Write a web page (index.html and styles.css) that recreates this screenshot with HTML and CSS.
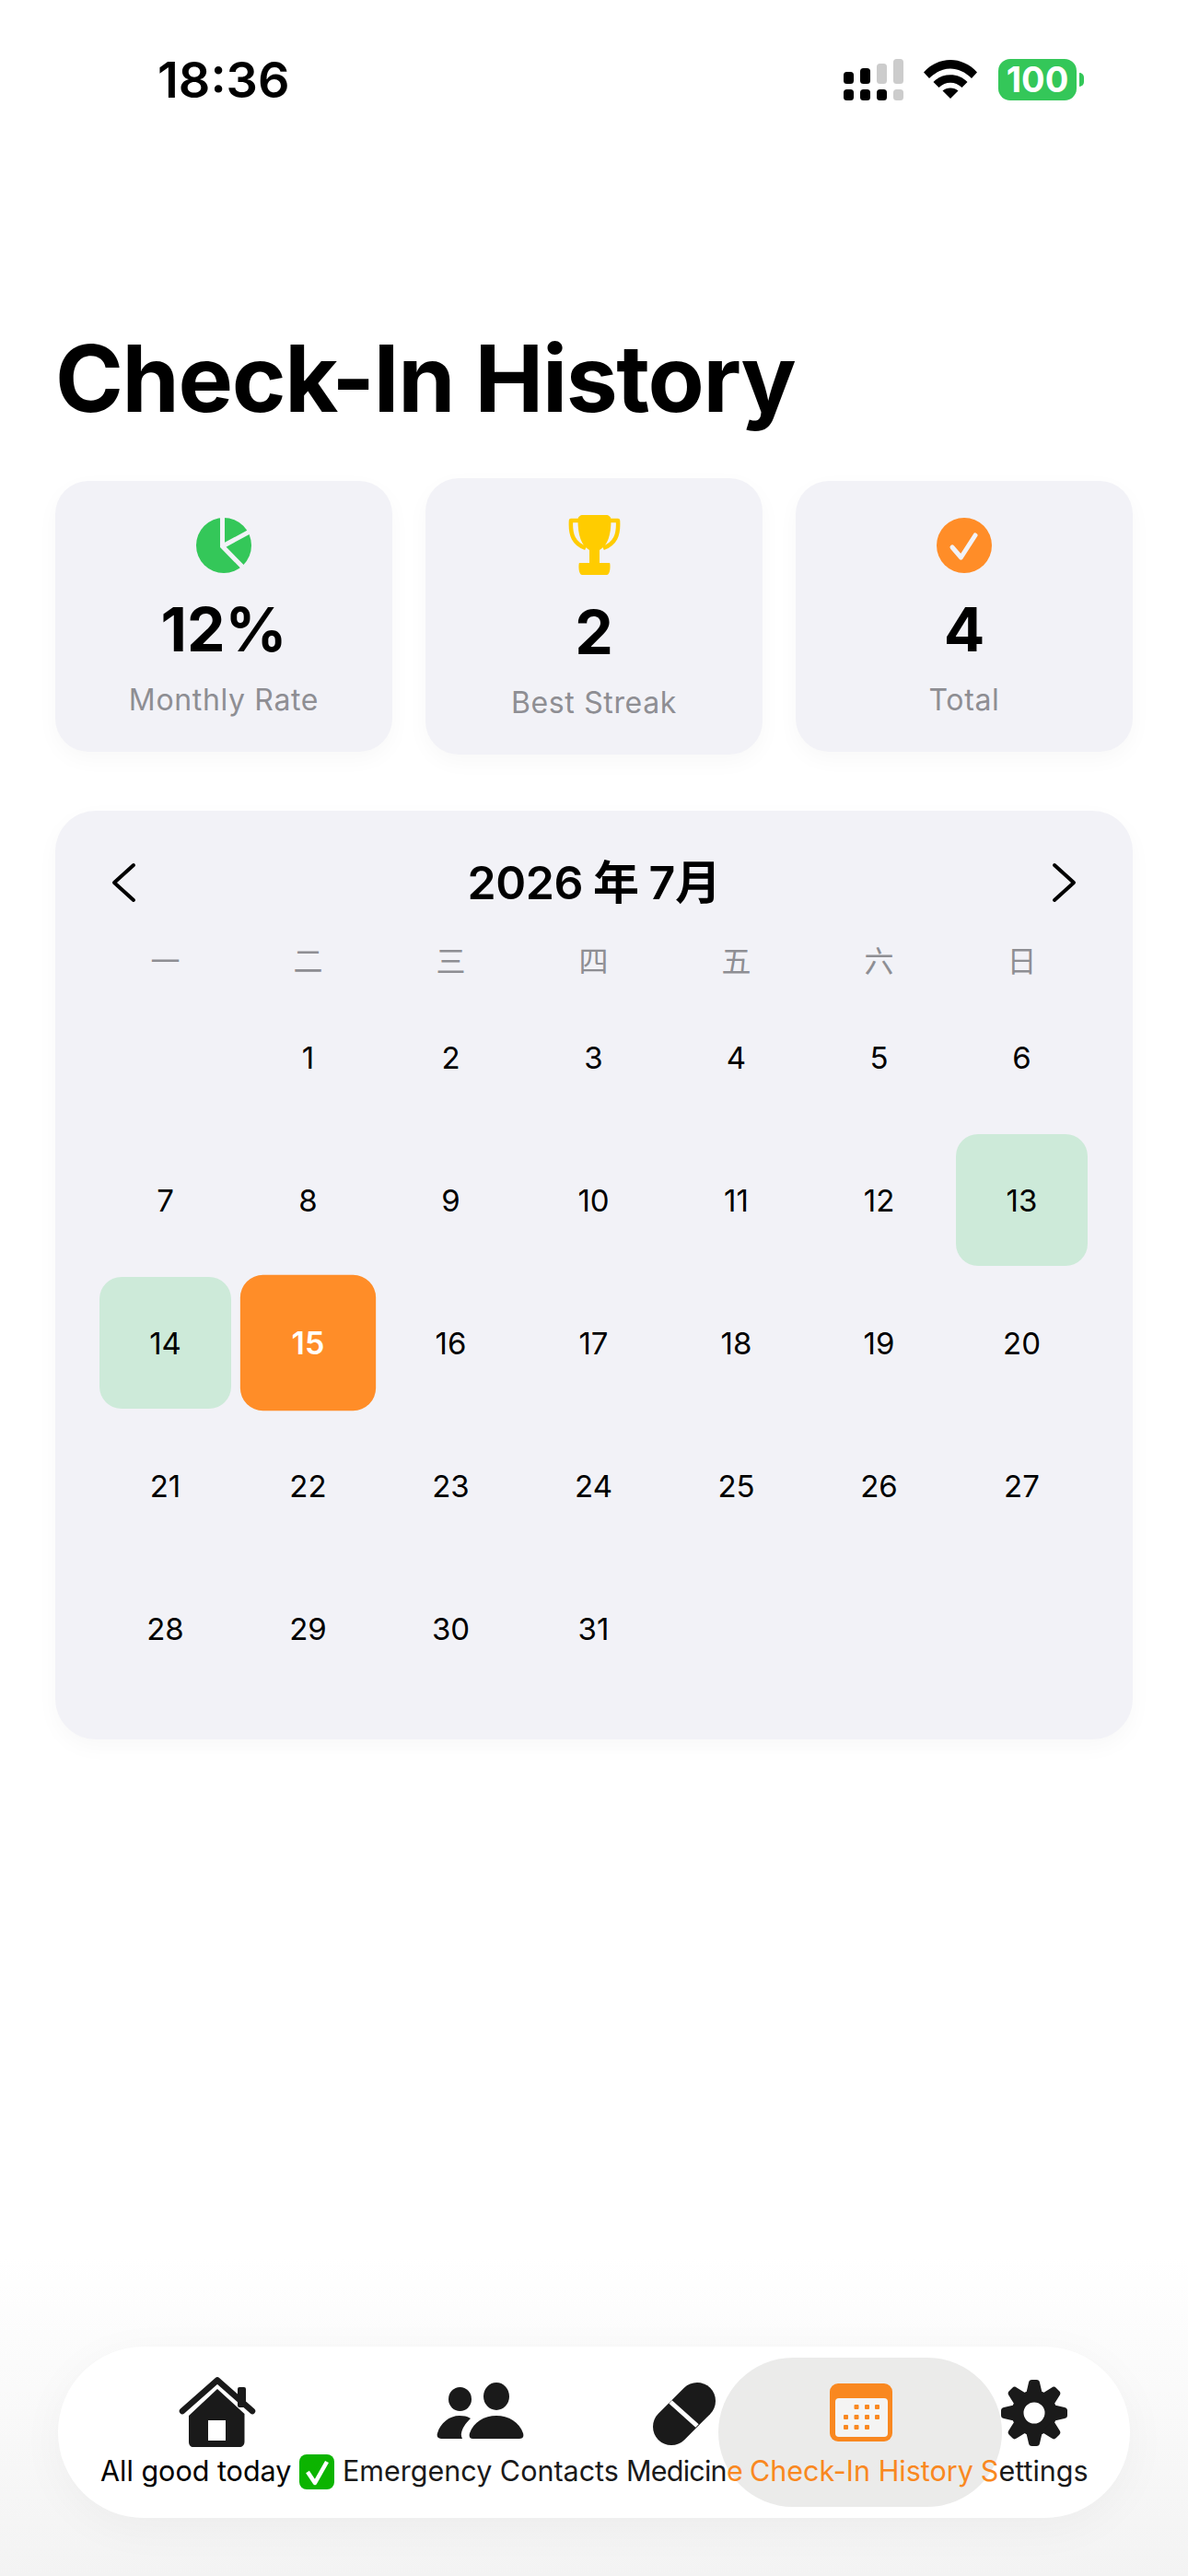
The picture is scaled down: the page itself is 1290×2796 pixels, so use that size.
FILE: index.html
```html
<!DOCTYPE html>
<html lang="en">
<head>
<meta charset="utf-8">
<title>Check-In History</title>
<link rel="stylesheet" href="styles.css">
</head>
<body>
<div class="page">
  <header class="status">
    <span class="time">18:36</span>
    <div class="status-icons">
      <svg class="signal" width="65" height="45" viewBox="0 0 65 45">
        <rect x="0" y="14" width="11" height="13" rx="3.5" fill="#000"/>
        <rect x="18" y="10" width="11" height="17" rx="3.5" fill="#000"/>
        <rect x="36" y="5" width="11" height="22" rx="3.5" fill="#ccc"/>
        <rect x="54" y="0" width="11" height="27" rx="3.5" fill="#ccc"/>
        <rect x="0" y="33" width="11" height="12" rx="3.5" fill="#000"/>
        <rect x="18" y="33" width="11" height="12" rx="3.5" fill="#000"/>
        <rect x="36" y="33" width="11" height="12" rx="3.5" fill="#000"/>
        <rect x="54" y="33" width="11" height="12" rx="3.5" fill="#ccc"/>
      </svg>
      <svg class="wifi" width="58" height="42" viewBox="0 0 58 42">
        <path d="M0 13.5 C16 -4.5 42 -4.5 58 13.5 L52 20 C38 6 20 6 6 20 Z" fill="#000"/>
        <path d="M10.500 24 C20 13.500 38 13.500 47.500 24 L41.500 30 C34 23 24 23 16.500 30 Z" fill="#000"/>
        <path d="M20.500 33.500 C25 29.500 33 29.500 37.500 33.500 L29 42 Z" fill="#000"/>
      </svg>
      <div class="battery">
        <span class="battery-body">100</span>
        <span class="battery-nub"></span>
      </div>
    </div>
  </header>

  <main class="content">
    <h1 class="title">Check-In History</h1>

    <section class="stats">
      <div class="stat">
        <svg class="stat-icon" width="60" height="60" viewBox="0 0 60 60">
          <circle cx="30" cy="30" r="30" fill="#34c759"/>
          <path d="M28.500 -1 V31 L51 54 M28.500 31 L60 14" fill="none" stroke="#f2f2f7" stroke-width="5"/>
        </svg>
        <div class="stat-value">12%</div>
        <div class="stat-label">Monthly Rate</div>
      </div>
      <div class="stat">
        <svg class="stat-icon" width="57" height="66" viewBox="0 0 57 66">
          <path d="M11 6 H3 C2 22 6 31 19 36 M46 6 H54 C55 22 51 31 38 36" fill="none" stroke="#ffcc00" stroke-width="4.500" stroke-linejoin="round"/>
          <path d="M16 0 H41 C44 0 46.500 2 46.500 5 C46.500 22 43 33 34 38 V52 H45 C46 53 46 65 42 65 H15 C11 65 11 53 12 52 H23 V38 C14 33 10.500 22 10.500 5 C10.500 2 13 0 16 0 Z" fill="#ffcc00"/>
        </svg>
        <div class="stat-value">2</div>
        <div class="stat-label">Best Streak</div>
      </div>
      <div class="stat">
        <svg class="stat-icon" width="60" height="60" viewBox="0 0 60 60">
          <circle cx="30" cy="30" r="30" fill="#ff8d28"/>
          <path d="M17 32 L26.500 43 L42 19" fill="none" stroke="#f2f2f7" stroke-width="5" stroke-linecap="round" stroke-linejoin="round"/>
        </svg>
        <div class="stat-value">4</div>
        <div class="stat-label">Total</div>
      </div>
    </section>

    <section class="calendar">
      <div class="cal-head">
        <svg class="chev" width="28" height="44" viewBox="0 0 28 44"><path d="M25 3 L4 22 L25 41" fill="none" stroke="#000" stroke-width="4" stroke-linecap="round" stroke-linejoin="round"/></svg>
        <div class="cal-title">2026 年 7月</div>
        <svg class="chev" width="28" height="44" viewBox="0 0 28 44"><path d="M3 3 L24 22 L3 41" fill="none" stroke="#000" stroke-width="4" stroke-linecap="round" stroke-linejoin="round"/></svg>
      </div>
      <div class="weekdays">
        <span>一</span><span>二</span><span>三</span><span>四</span><span>五</span><span>六</span><span>日</span>
      </div>
      <div class="days">
        <span class="day"></span><span class="day">1</span><span class="day">2</span><span class="day">3</span><span class="day">4</span><span class="day">5</span><span class="day">6</span>
        <span class="day">7</span><span class="day">8</span><span class="day">9</span><span class="day">10</span><span class="day">11</span><span class="day">12</span><span class="day done">13</span>
        <span class="day done">14</span><span class="day today">15</span><span class="day">16</span><span class="day">17</span><span class="day">18</span><span class="day">19</span><span class="day">20</span>
        <span class="day">21</span><span class="day">22</span><span class="day">23</span><span class="day">24</span><span class="day">25</span><span class="day">26</span><span class="day">27</span>
        <span class="day">28</span><span class="day">29</span><span class="day">30</span><span class="day">31</span>
      </div>
    </section>
  </main>

  <nav class="tabbar">
    <div class="tab-active"></div>
    <div class="tab tab-home">
      <svg class="tab-icon" width="84" height="80" viewBox="0 0 84 80">
        <path d="M11 42 L42 13 L71.500 40 V70 C71.500 74 69 76 66 76 H16 C13 76 11 74 11 70 Z M32 47 V69 H51 V47 Z" fill="#1a1a1a" fill-rule="evenodd"/>
        <path d="M4 37 L42 3.500 L80 37" fill="none" stroke="#1a1a1a" stroke-width="6.500" stroke-linecap="round" stroke-linejoin="round"/>
        <rect x="64" y="11" width="9" height="22" rx="2" fill="#1a1a1a"/>
      </svg>
      <span class="tab-label">All good today <svg class="emoji" width="38" height="38" viewBox="0 0 38 38" role="img" aria-label="✅"><rect width="38" height="38" rx="8" fill="#0cb400"/><path d="M9 19 L17 31 L30 8" fill="none" stroke="#fff" stroke-width="4.500" stroke-linejoin="round"/></svg></span>
    </div>
    <div class="tab">
      <svg class="tab-icon" width="95" height="80" viewBox="0 0 95 80">
        <ellipse cx="25.500" cy="24" rx="12.500" ry="13" fill="#1a1a1a"/>
        <ellipse cx="65" cy="21" rx="14" ry="15" fill="#1a1a1a"/>
        <path d="M5 67 C1 67 0 64 1 61 C4 50 14 42 25 42 C30 42 34 43 37 45 C32 50 28 55 27 61 C26.500 63 27 65 28 67 Z" fill="#1a1a1a"/>
        <path d="M39 67 C36 67 35 64 36 61 C40 49 52 42 65 42 C78 42 90 49 94 61 C95 64 94 67 90 67 Z" fill="#1a1a1a"/>
      </svg>
      <span class="tab-label">Emergency Contacts</span>
    </div>
    <div class="tab">
      <svg class="tab-icon" width="68" height="80" viewBox="0 0 68 80">
        <path d="M20 54 L48 26" fill="none" stroke="#1a1a1a" stroke-width="40" stroke-linecap="round"/>
        <path d="M19 27 L48 53" fill="none" stroke="#fff" stroke-width="5"/>
      </svg>
      <span class="tab-label tab-label-tight">Medicin<span class="tint">e</span></span>
    </div>
    <div class="tab">
      <svg class="tab-icon" width="68" height="80" viewBox="0 0 68 80">
        <rect y="7" width="68" height="63" rx="9" fill="#f98820"/>
        <rect x="6" y="23" width="57" height="42" rx="4" fill="#f4f4f3"/>
        <g fill="#f98820">
          <rect x="26.500" y="30" width="5" height="5" rx="1"/><rect x="38" y="30" width="5" height="5" rx="1"/><rect x="49" y="30" width="5" height="5" rx="1"/>
          <rect x="15" y="41" width="5" height="5" rx="1"/><rect x="26.500" y="41" width="5" height="5" rx="1"/><rect x="38" y="41" width="5" height="5" rx="1"/><rect x="49" y="41" width="5" height="5" rx="1"/>
          <rect x="15" y="52" width="5" height="5" rx="1"/><rect x="26.500" y="52" width="5" height="5" rx="1"/><rect x="38" y="52" width="5" height="5" rx="1"/>
        </g>
      </svg>
      <span class="tab-label tint">Check-In History</span>
    </div>
    <div class="tab">
      <svg class="tab-icon" width="72" height="80" viewBox="0 0 72 80">
        <g transform="translate(0 3)">
          <circle cx="36" cy="36" r="18" fill="none" stroke="#1a1a1a" stroke-width="13"/>
          <g fill="#1a1a1a">
            <path d="M27 16 L30 3 Q30.500 0 33.500 0 H38.500 Q41.500 0 42 3 L45 16 Z"/>
            <path transform="rotate(45 36 36)" d="M27 16 L30 3 Q30.500 0 33.500 0 H38.500 Q41.500 0 42 3 L45 16 Z"/>
            <path transform="rotate(90 36 36)" d="M27 16 L30 3 Q30.500 0 33.500 0 H38.500 Q41.500 0 42 3 L45 16 Z"/>
            <path transform="rotate(135 36 36)" d="M27 16 L30 3 Q30.500 0 33.500 0 H38.500 Q41.500 0 42 3 L45 16 Z"/>
            <path transform="rotate(180 36 36)" d="M27 16 L30 3 Q30.500 0 33.500 0 H38.500 Q41.500 0 42 3 L45 16 Z"/>
            <path transform="rotate(225 36 36)" d="M27 16 L30 3 Q30.500 0 33.500 0 H38.500 Q41.500 0 42 3 L45 16 Z"/>
            <path transform="rotate(270 36 36)" d="M27 16 L30 3 Q30.500 0 33.500 0 H38.500 Q41.500 0 42 3 L45 16 Z"/>
            <path transform="rotate(315 36 36)" d="M27 16 L30 3 Q30.500 0 33.500 0 H38.500 Q41.500 0 42 3 L45 16 Z"/>
          </g>
        </g>
      </svg>
      <span class="tab-label"><span class="tint">S</span>ettings</span>
    </div>
  </nav>
</div>
</body>
</html>
```

FILE: styles.css
```css
* { box-sizing: border-box; }
html, body { margin: 0; padding: 0; background: #fff; }
body { font-family: Inter, "Noto Sans CJK SC", sans-serif; color: #000; }

.page {
  position: relative;
  width: 1290px;
  height: 2796px;
  overflow: hidden;
  display: flex;
  flex-direction: column;
  background: linear-gradient(to bottom, #fff 0, #fff 2450px, #f8f8f8 2650px, #f3f3f3 2796px);
}

.status {
  height: 174px;
  display: flex;
  justify-content: space-between;
  padding: 64px 113px 0 171px;
}
.time { font-size: 54px; font-weight: 600; line-height: 46px; }
.status-icons { display: flex; align-items: flex-start; height: 45px; }
.signal { margin-right: 22px; }
.wifi { margin-right: 23px; margin-top: 1px; }
.battery { display: flex; align-items: center; }
.battery-body {
  width: 85px; height: 45px; border-radius: 13px; background: #34c759; color: #fff;
  font-size: 38px; font-weight: 700; line-height: 45px; text-align: center;
}
.battery-nub { width: 5px; height: 15px; margin-left: 3px; background: #34c759; border-radius: 0 8px 8px 0; }

.content { padding: 0 60px; }
.title { margin: 177px 0 48px; font-size: 100px; line-height: 120px; font-weight: 700; letter-spacing: -1.35px; }

.stats { display: grid; grid-template-columns: repeat(3, 366px); column-gap: 36px; align-items: center; }
.stat {
  display: flex; flex-direction: column; align-items: center;
  padding: 40px 0 36px;
  background: #f2f2f7; border-radius: 36px;
  box-shadow: 0 8px 24px rgba(0,0,0,.03);
}
.stat-icon { display: block; }
.stat-value { font-size: 66px; font-weight: 700; line-height: 80px; margin-top: 21px; }
.stat-label { font-size: 32px; color: #8e8e93; line-height: 40px; margin-top: 17px; letter-spacing: .65px; }

.calendar {
  margin-top: 61px;
  height: 1008px;
  padding: 42px 42px 0;
  background: #f2f2f7;
  border-radius: 44px;
  box-shadow: 0 8px 24px rgba(0,0,0,.03);
}
.cal-head { display: flex; justify-content: space-between; align-items: center; height: 72px; padding: 0 18px; }
.cal-title { font-size: 50px; font-weight: 600; word-spacing: -1px; letter-spacing: -.5px; margin-top: -9px; }
.weekdays { display: grid; grid-template-columns: repeat(7, 155px); margin-top: 30px; height: 46px; }
.weekdays span { text-align: center; font-size: 32px; line-height: 40px; color: #8e8e93; }
.days { display: grid; grid-template-columns: repeat(7, 155px); grid-auto-rows: 155px; }
.day {
  margin: 6px; border-radius: 24px;
  display: flex; align-items: center; justify-content: center;
  font-size: 33px;
}
.done { background: #cdead9; }
.today { background: #ff8d28; color: #fff; font-weight: 600; transform: scale(1.03); }

.tabbar {
  position: absolute; left: 63px; top: 2547px;
  width: 1164px; height: 186px;
  display: flex; gap: 8px;
  padding: 33px 0 0 46px;
  background: #fff;
  border-radius: 93px;
  box-shadow: 0 10px 50px rgba(0,0,0,.04);
}
.tab-active {
  position: absolute; left: 717px; top: 12px;
  width: 308px; height: 162px;
  border-radius: 81px;
  background: #ebebea;
}
.tab { position: relative; display: flex; flex-direction: column; align-items: center; flex: none; }
.tab-home { margin-right: 1px; }
.tab-icon { display: block; }
.tab-label { font-size: 30.5px; line-height: 36px; margin-top: 4px; white-space: nowrap; color: #1a1a1a; }
.tab-home .tab-label { color: #000; }
.tab-label-tight { letter-spacing: -.75px; }
.tint, .tab-label.tint { color: #f98820; }
.emoji { vertical-align: -9px; }
```
